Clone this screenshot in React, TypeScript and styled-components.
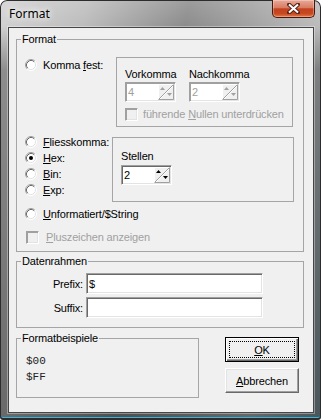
import styled, { createGlobalStyle } from 'styled-components'

const GlobalStyle = createGlobalStyle`
  html, body {
    margin: 0;
    padding: 0;
    background: #fff;
  }
  body {
    font-family: "Liberation Sans", Arial, sans-serif;
    font-size: 11px;
    letter-spacing: -0.15px;
    color: #000;
  }
`

const Window = styled.div`
  width: 321px;
  height: 420px;
  box-sizing: border-box;
  display: flex;
  flex-direction: column;
  border-radius: 7px 7px 3px 3px;
  overflow: hidden;
  background:
    linear-gradient(180deg, rgba(255, 255, 255, 0.15) 0px, rgba(255, 255, 255, 0) 26px, rgba(20, 20, 20, 0.35) 70px, rgba(20, 20, 20, 0.5) 100%),
    linear-gradient(100deg, #d2d2d2 0%, #bdbdbd 22%, #8c8c8c 48%, #9f9f9f 62%, #bcbcbc 82%, #7b97a0 100%);
  box-shadow:
    inset 0 0 0 1px #2c2c2c,
    inset 0 -1px 0 1px #2c2c2c,
    inset 0 -3px 0 #3ab4dc;
`

const TitleBar = styled.div`
  height: 27px;
  flex: none;
  display: flex;
  justify-content: space-between;
  align-items: flex-start;
  padding: 0 6px 0 9px;
`

const Title = styled.span`
  padding-top: 6px;
  font: 12px/16px "Noto Sans", "Open Sans", sans-serif;
  letter-spacing: 0;
  color: #000;
  text-shadow: 0 0 6px #fff, 0 0 10px rgba(255, 255, 255, 0.9);
`

const CloseButton = styled.div`
  width: 43px;
  height: 18px;
  box-sizing: border-box;
  display: flex;
  align-items: center;
  justify-content: center;
  border: 1px solid #4a170d;
  border-top: none;
  border-radius: 0 0 5px 5px;
  background: linear-gradient(180deg, #e9a897 0%, #d87d63 45%, #c2411f 52%, #c8491f 80%, #e07a4c 100%);
  box-shadow: inset 0 0 0 1px rgba(255, 255, 255, 0.3);
`

const Client = styled.div`
  flex: 1;
  margin: 0 7px 7px 8px;
  border: 1px solid #464646;
  box-shadow: 0 0 0 1px rgba(255, 255, 255, 0.35);
  background: #f0f0f0;
  padding: 5px 0 0 7px;
  display: flex;
  flex-direction: column;
  align-items: flex-start;
`

const Group = styled.fieldset<{ $width: number; $top?: number }>`
  margin: ${p => p.$top ?? 0}px 0 0 0;
  padding: 0;
  width: ${p => p.$width}px;
  min-width: 0;
  box-sizing: border-box;
  border: 1px solid #a5a5a5;
`

const Legend = styled.legend`
  margin-left: 4px;
  padding: 0 1px;
  font-size: 11px;
  line-height: 13px;
`

const FormatBody = styled.div`
  padding: 11px 0 6px 8px;
  display: flex;
  flex-direction: column;
`

const Row = styled.div<{ $top?: number }>`
  display: flex;
  align-items: flex-start;
  margin-top: ${p => p.$top ?? 0}px;
`

const OptionColumn = styled.div<{ $width: number }>`
  width: ${p => p.$width}px;
  flex: none;
  display: flex;
  flex-direction: column;
`

const Option = styled.div<{ $gap?: number; $disabled?: boolean; $indent?: number }>`
  display: flex;
  align-items: center;
  height: 16px;
  gap: ${p => p.$gap ?? 6}px;
  padding-left: ${p => p.$indent ?? 0}px;
  white-space: nowrap;
  color: ${p => (p.$disabled ? '#a0a0a0' : '#000')};
`

const Frame = styled.div<{ $w: number; $h: number; $top?: number; $pt: number }>`
  width: ${p => p.$w}px;
  height: ${p => p.$h}px;
  box-sizing: border-box;
  margin-top: ${p => p.$top ?? 0}px;
  padding: ${p => p.$pt}px 0 0 8px;
  border: 1px solid #a5a5a5;
  display: flex;
  flex-direction: column;
  align-items: flex-start;
`

const SpinRow = styled.div`
  display: flex;
`

const SpinColumn = styled.div<{ $width?: number }>`
  width: ${p => (p.$width ? `${p.$width}px` : 'auto')};
  display: flex;
  flex-direction: column;
`

const FieldLabel = styled.span<{ $gapBelow: number }>`
  line-height: 13px;
  margin-bottom: ${p => p.$gapBelow}px;
`

const SpinBox = styled.div<{ $disabled?: boolean }>`
  width: 51px;
  height: 20px;
  box-sizing: border-box;
  display: flex;
  padding: 1px;
  background: #fff;
  border: 1px solid;
  border-color: #a0a0a0 #fff #fff #a0a0a0;
  box-shadow: inset 1px 1px 0 ${p => (p.$disabled ? '#a0a0a0' : '#696969')}, inset -1px -1px 0 #e3e3e3;
`

const SpinValue = styled.span<{ $disabled?: boolean }>`
  flex: 1;
  padding-left: 1px;
  line-height: 16px;
  color: ${p => (p.$disabled ? '#a0a0a0' : '#000')};
`

const CheckBox = styled.span`
  width: 13px;
  height: 13px;
  box-sizing: border-box;
  flex: none;
  background: #f0f0f0;
  border: 1px solid;
  border-color: #a0a0a0 #fff #fff #a0a0a0;
  box-shadow: inset 1px 1px 0 #a0a0a0, inset -1px -1px 0 #e3e3e3;
`

const CheckRow = styled.div`
  margin-top: 4px;
`

const FrameGrid = styled.div`
  display: grid;
  grid-template-columns: 66px 177px;
  grid-auto-rows: 21px;
  column-gap: 3px;
  row-gap: 3px;
  align-items: center;
  padding: 5px 0 9px 0;
`

const FieldName = styled.span`
  text-align: right;
`

const TextInput = styled.input`
  width: 177px;
  height: 21px;
  box-sizing: border-box;
  margin: 0;
  padding: 0 2px;
  font: 11px "Liberation Sans", Arial, sans-serif;
  color: #000;
  background: #fff;
  border: 1px solid;
  border-color: #a0a0a0 #fff #fff #a0a0a0;
  box-shadow: inset 1px 1px 0 #696969, inset -1px -1px 0 #e3e3e3;
  outline: none;
`

const BottomRow = styled.div`
  display: flex;
  align-items: flex-start;
  margin-top: 4px;
`

const SampleBody = styled.div`
  padding: 8px 0 12px 9px;
  font: 11px/16px "Liberation Mono", "Courier New", monospace;
  letter-spacing: 0;
  color: #222;
`

const ButtonColumn = styled.div`
  display: flex;
  flex-direction: column;
  gap: 6px;
  margin: 5px 0 0 26px;
`

const Button = styled.button<{ $default?: boolean }>`
  width: 74px;
  height: 25px;
  box-sizing: border-box;
  margin: 0;
  padding: ${p => (p.$default ? '3px' : '4px')};
  display: flex;
  font: 11px "Liberation Sans", Arial, sans-serif;
  letter-spacing: -0.15px;
  color: #000;
  background: #f0f0f0;
  border: 1px solid;
  border-color: ${p => (p.$default ? '#000' : '#fff #696969 #696969 #fff')};
  box-shadow: ${p =>
    p.$default
      ? 'inset 1px 1px 0 #fff, inset -1px -1px 0 #696969, inset -2px -2px 0 #a0a0a0'
      : 'inset -1px -1px 0 #a0a0a0, inset 1px 1px 0 #e3e3e3'};
`

const ButtonFace = styled.span<{ $focused?: boolean }>`
  flex: 1;
  display: flex;
  align-items: center;
  justify-content: center;
  border: 1px dotted ${p => (p.$focused ? '#000' : 'transparent')};
`

function Radio({ checked }: { checked?: boolean }) {
  return (
    <svg width="12" height="12" viewBox="0 0 12 12">
      <circle cx="6" cy="6" r="5" fill="#fff" />
      <path d="M2.11 9.89A5.5 5.5 0 0 1 9.89 2.11" stroke="#a0a0a0" fill="none" />
      <path d="M9.89 2.11A5.5 5.5 0 0 1 2.11 9.89" stroke="#fff" fill="none" />
      <path d="M2.82 9.18A4.5 4.5 0 0 1 9.18 2.82" stroke="#696969" fill="none" />
      <path d="M9.18 2.82A4.5 4.5 0 0 1 2.82 9.18" stroke="#e3e3e3" fill="none" />
      {checked && <circle cx="6" cy="6" r="2" fill="#000" />}
    </svg>
  )
}

function SpinArrows({ disabled }: { disabled?: boolean }) {
  const c = disabled ? '#a0a0a0' : '#000'
  return (
    <svg width="16" height="16" viewBox="0 0 16 16">
      <rect width="16" height="16" fill="#f0f0f0" />
      <path d="M0.5 15.5V0.5H15.5" stroke="#fff" fill="none" />
      <path d="M0.5 15.5H15.5V0.5" stroke="#a0a0a0" fill="none" />
      <path d="M1 15L15 1" stroke="#a0a0a0" />
      <path d="M2 15L15 2" stroke="#fff" />
      <path d="M2 6h5l-2.5-3z" fill={c} />
      <path d="M9 9h5l-2.5 3z" fill={c} />
    </svg>
  )
}

function Spin({ value, disabled }: { value: string; disabled?: boolean }) {
  return (
    <SpinBox $disabled={disabled}>
      <SpinValue $disabled={disabled}>{value}</SpinValue>
      <SpinArrows disabled={disabled} />
    </SpinBox>
  )
}

export default function App() {
  return (
    <>
      <GlobalStyle />
      <Window>
        <TitleBar>
          <Title>Format</Title>
          <CloseButton>
            <svg width="13" height="11" viewBox="0 0 13 11">
              <path d="M2 1.5L11 9.5M11 1.5L2 9.5" stroke="#5a2418" strokeWidth="4" strokeLinecap="round" />
              <path d="M2 1.5L11 9.5M11 1.5L2 9.5" stroke="#fff" strokeWidth="2" />
            </svg>
          </CloseButton>
        </TitleBar>
        <Client>
          <Group $width={288}>
            <Legend>Format</Legend>
            <FormatBody>
              <Row>
                <OptionColumn $width={91}>
                  <Option>
                    <Radio />
                    <span>Komma <u>f</u>est:</span>
                  </Option>
                </OptionColumn>
                <Frame $w={177} $h={70} $pt={10}>
                  <SpinRow>
                    <SpinColumn $width={64}>
                      <FieldLabel $gapBelow={1}>Vorkomma</FieldLabel>
                      <Spin value="4" disabled />
                    </SpinColumn>
                    <SpinColumn>
                      <FieldLabel $gapBelow={1}>Nachkomma</FieldLabel>
                      <Spin value="2" disabled />
                    </SpinColumn>
                  </SpinRow>
                  <CheckRow>
                    <Option $gap={5} $disabled>
                      <CheckBox />
                      <span>führende <u>N</u>ullen unterdrücken</span>
                    </Option>
                  </CheckRow>
                </Frame>
              </Row>
              <Row $top={7}>
                <OptionColumn $width={87}>
                  <Option>
                    <Radio />
                    <span><u>F</u>liesskomma:</span>
                  </Option>
                  <Option>
                    <Radio checked />
                    <span><u>H</u>ex:</span>
                  </Option>
                  <Option>
                    <Radio />
                    <span><u>B</u>in:</span>
                  </Option>
                  <Option>
                    <Radio />
                    <span><u>E</u>xp:</span>
                  </Option>
                </OptionColumn>
                <Frame $w={182} $h={65} $top={3} $pt={12}>
                  <FieldLabel $gapBelow={2}>Stellen</FieldLabel>
                  <Spin value="2" />
                </Frame>
              </Row>
              <Row $top={4}>
                <Option>
                  <Radio />
                  <span><u>U</u>nformatiert/$String</span>
                </Option>
              </Row>
              <Row $top={7}>
                <Option $gap={7} $indent={1} $disabled>
                  <CheckBox />
                  <span><u>P</u>luszeichen anzeigen</span>
                </Option>
              </Row>
            </FormatBody>
          </Group>

          <Group $width={288} $top={3}>
            <Legend>Datenrahmen</Legend>
            <FrameGrid>
              <FieldName>Prefix:</FieldName>
              <TextInput readOnly value="$" />
              <FieldName>Suffix:</FieldName>
              <TextInput readOnly value="" />
            </FrameGrid>
          </Group>

          <BottomRow>
            <Group $width={183}>
              <Legend>Formatbeispiele</Legend>
              <SampleBody>
                <div>$00</div>
                <div>$FF</div>
              </SampleBody>
            </Group>
            <ButtonColumn>
              <Button $default>
                <ButtonFace $focused>
                  <span><u>O</u>K</span>
                </ButtonFace>
              </Button>
              <Button>
                <ButtonFace>
                  <span><u>A</u>bbrechen</span>
                </ButtonFace>
              </Button>
            </ButtonColumn>
          </BottomRow>
        </Client>
      </Window>
    </>
  )
}
